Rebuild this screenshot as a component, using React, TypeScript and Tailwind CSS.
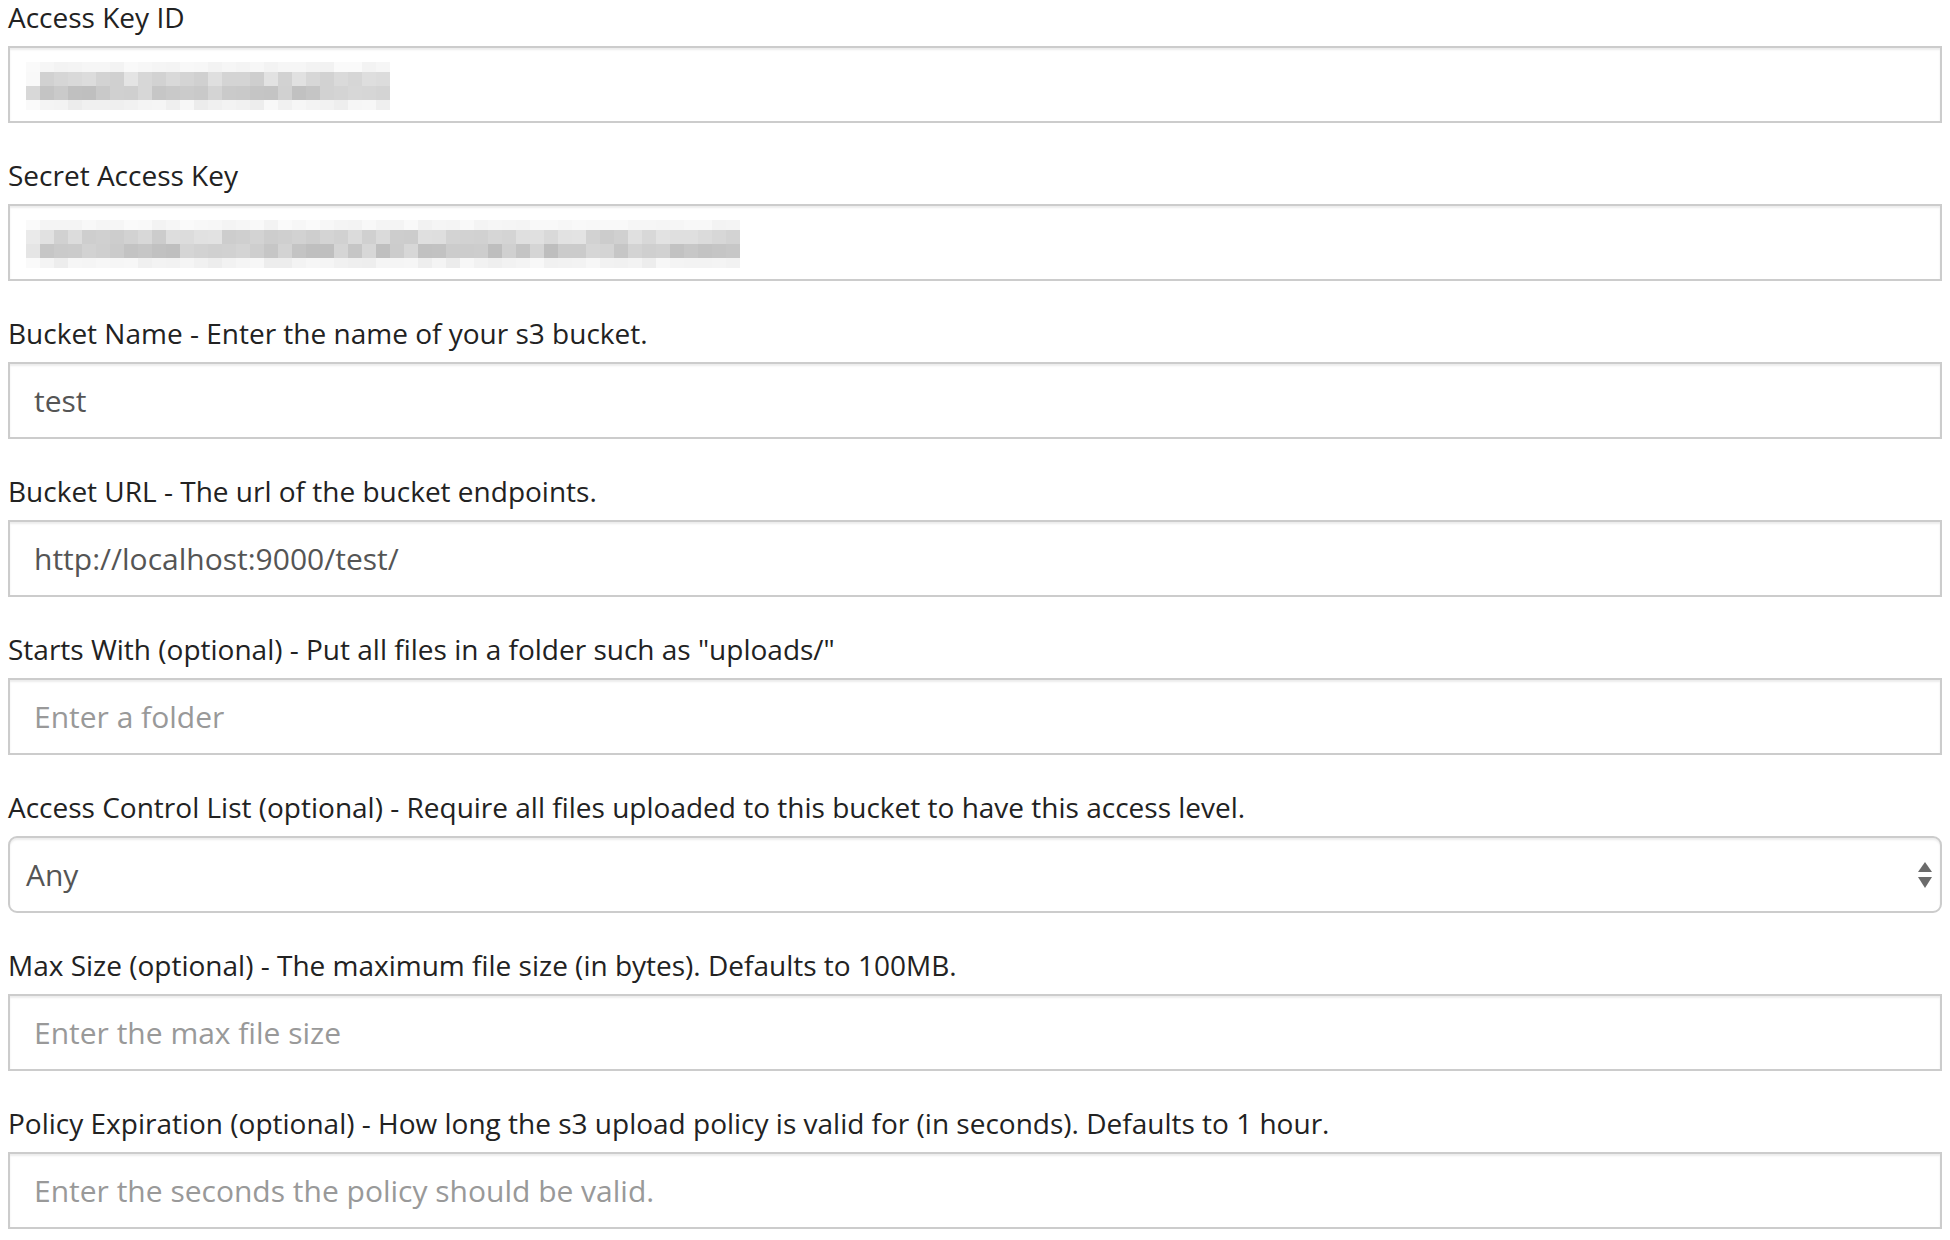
import React from "react"

type Field = {
  label: string
  value?: string
  placeholder?: string
  mosaic?: { width: number; seed: number }
  select?: boolean
}

const fields: Field[] = [
  { label: "Access Key ID", mosaic: { width: 364, seed: 7 } },
  { label: "Secret Access Key", mosaic: { width: 714, seed: 21 } },
  { label: "Bucket Name - Enter the name of your s3 bucket.", value: "test" },
  { label: "Bucket URL - The url of the bucket endpoints.", value: "http://localhost:9000/test/" },
  { label: 'Starts With (optional) - Put all files in a folder such as "uploads/"', placeholder: "Enter a folder" },
  {
    label: "Access Control List (optional) - Require all files uploaded to this bucket to have this access level.",
    value: "Any",
    select: true,
  },
  { label: "Max Size (optional) - The maximum file size (in bytes). Defaults to 100MB.", placeholder: "Enter the max file size" },
  {
    label: "Policy Expiration (optional) - How long the s3 upload policy is valid for (in seconds). Defaults to 1 hour.",
    placeholder: "Enter the seconds the policy should be valid.",
  },
]

// redacted value, drawn as a pixel mosaic
function Mosaic({ width, seed }: { width: number; seed: number }) {
  let s = seed
  const rand = () => {
    s = (s * 9301 + 49297) % 233280
    return s / 233280
  }
  const cols = Math.floor(width / 14)
  const rows = [
    { y: 0, h: 10, min: 242, max: 250 },
    { y: 10, h: 14, min: 204, max: 228 },
    { y: 24, h: 14, min: 190, max: 216 },
    { y: 38, h: 10, min: 236, max: 248 },
  ]
  const rects: React.ReactNode[] = []
  rows.forEach((r, ri) => {
    for (let c = 0; c < cols; c++) {
      let g = Math.round(r.min + rand() * (r.max - r.min))
      if (c === 0) g = Math.min(250, g + 22)
      rects.push(<rect key={ri + "-" + c} x={c * 14} y={r.y} width={14} height={r.h} fill={`rgb(${g},${g},${g})`} />)
    }
  })
  return (
    <svg width={cols * 14} height={48} className="block">
      {rects}
    </svg>
  )
}

function SelectArrows() {
  return (
    <svg width="14" height="26" viewBox="0 0 14 26" className="block">
      <path d="M7 0 L14 10 L0 10 Z" fill="#6b6b6b" />
      <path d="M0 15 L14 15 L7 26 Z" fill="#6b6b6b" />
    </svg>
  )
}

export default function App() {
  return (
    <div className="min-h-screen bg-white px-2 text-[28px] text-[#222]" style={{ fontFamily: '"Open Sans", sans-serif' }}>
      {fields.map((f) => (
        <div key={f.label} className="mb-[35px]">
          <label className="block h-[46px] leading-[34px]">{f.label}</label>
          {f.mosaic ? (
            <div className="flex h-[77px] items-start border-2 border-[#ccc] pl-[16px] pt-[14px] shadow-[inset_0_2px_2px_rgba(0,0,0,0.075)]">
              <Mosaic width={f.mosaic.width} seed={f.mosaic.seed} />
            </div>
          ) : f.select ? (
            <div className="flex h-[77px] items-center justify-between rounded-[9px] border-2 border-[#ccc] pl-[16px] pr-[8px] text-[30px] text-[#555] shadow-[inset_0_2px_2px_rgba(0,0,0,0.075)]">
              <span>{f.value}</span>
              <SelectArrows />
            </div>
          ) : (
            <input
              readOnly
              value={f.value ?? ""}
              placeholder={f.placeholder}
              className="block h-[77px] w-full border-2 border-[#ccc] px-[24px] text-[30px] text-[#555] shadow-[inset_0_2px_2px_rgba(0,0,0,0.075)] outline-none placeholder:text-[#999]"
            />
          )}
        </div>
      ))}
    </div>
  )
}
